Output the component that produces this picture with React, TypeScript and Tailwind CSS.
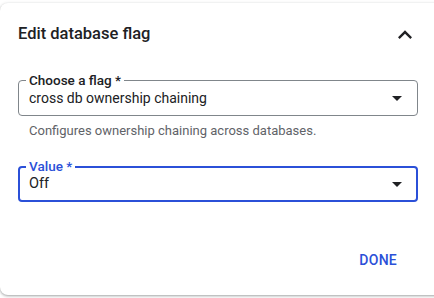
import React, { useState } from "react";

const BLUE = "text-[#2b50d8]";

const ArrowDrop = () => (
  <svg width="24" height="24" viewBox="0 0 24 24" className="shrink-0">
    <path d="M7 10l5 5 5-5z" fill="#202124" />
  </svg>
);

const ChevronUp = () => (
  <svg width="28" height="28" viewBox="0 0 24 24">
    <path d="M12 8l-6 6 1.41 1.41L12 10.83l4.59 4.58L18 14z" fill="#202124" />
  </svg>
);

const App = () => {
  const [flag] = useState("cross db ownership chaining");
  const [value] = useState("Off");

  return (
    <div className="w-[434px] h-[298px] bg-white overflow-hidden pt-[3px] font-['Roboto',sans-serif]">
      <div className="w-[444px] h-[292px] bg-white rounded-lg shadow-[0_1px_2px_rgba(60,64,67,0.3),0_1px_3px_1px_rgba(60,64,67,0.15)]">
        <div className="w-[434px] flex flex-col pt-[19px] pl-[18px] pr-[15px]">
          {/* header */}
          <div className="flex items-center justify-between h-[24px]">
            <h2 className="text-[16.5px] leading-[24px] font-medium text-[#202124]">Edit database flag</h2>
            <span className="mt-[2px]">
              <ChevronUp />
            </span>
          </div>

          {/* flag select */}
          <div className="relative mt-[34px] w-[400px] h-[36px] border border-[#80868b] rounded-[4px] flex items-center pl-[10px] pr-[8px]">
            <span className="absolute left-[7px] -top-[10px] px-[3px] bg-white text-[13.5px] leading-[18px] font-medium text-[#202124]">
              Choose a flag *
            </span>
            <span className="flex-1 text-[14px] leading-[20px] text-[#202124]">{flag}</span>
            <ArrowDrop />
          </div>
          <p className="mt-[7px] pl-[11px] text-[13px] leading-[16px] text-[#5f6368]">
            Configures ownership chaining across databases.
          </p>

          {/* value select */}
          <div className="relative mt-[27px] w-[400px] h-[36px] border-2 border-[#2b50d8] rounded-[4px] flex items-center pl-[9px] pr-[7px]">
            <span className={`absolute left-[6px] -top-[11px] px-[3px] bg-white text-[13.5px] leading-[18px] font-medium ${BLUE}`}>
              Value *
            </span>
            <span className="flex-1 text-[14.5px] leading-[20px] text-[#202124]">{value}</span>
            <ArrowDrop />
          </div>

          {/* actions */}
          <div className="flex justify-end mt-[48px] pr-[22px]">
            <button className={`text-[14px] leading-[20px] font-medium tracking-[0.25px] ${BLUE}`}>DONE</button>
          </div>
        </div>
      </div>
    </div>
  );
};

export default App;
